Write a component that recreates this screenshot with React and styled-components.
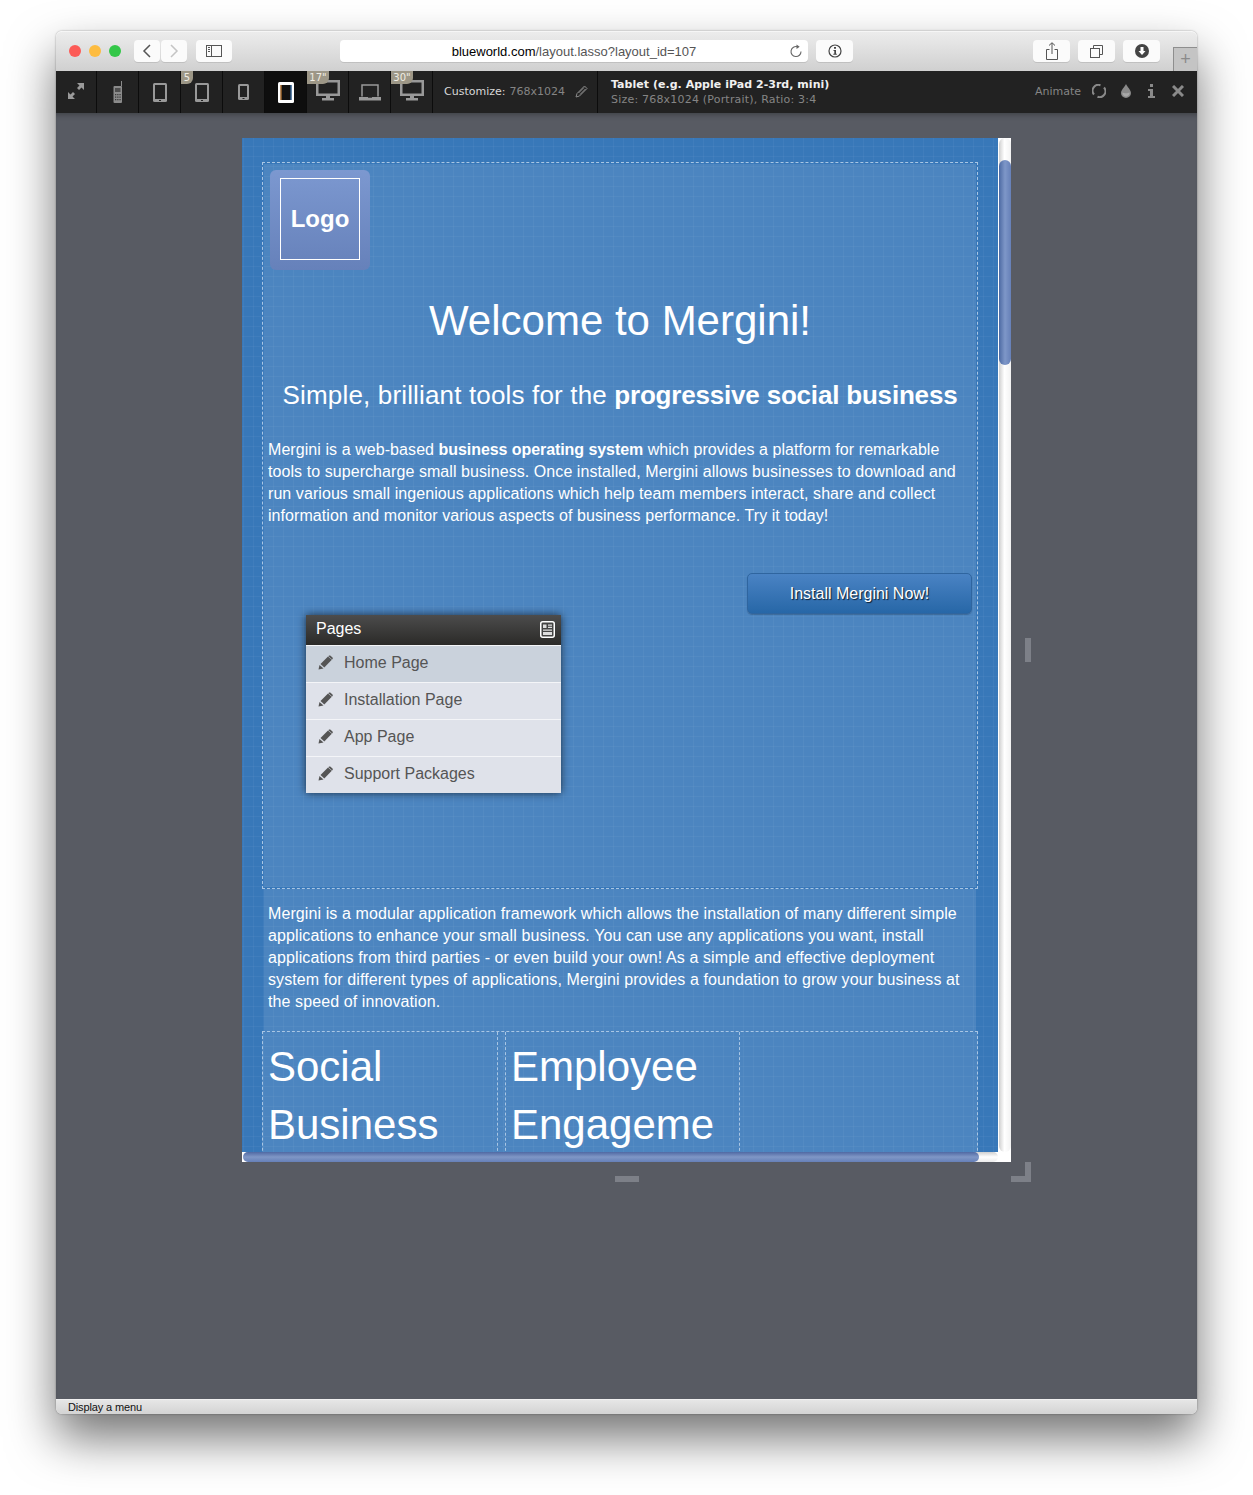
import styled, { createGlobalStyle } from 'styled-components';

const GlobalStyle = createGlobalStyle`
  html, body {
    margin: 0;
    padding: 0;
    background: #fff;
  }
  body {
    width: 1253px;
    height: 1495px;
    overflow: hidden;
    font-family: "Liberation Sans", Arial, sans-serif;
  }
`;

const Desk = styled.div`
  padding: 31px 56px 0;
`;

const Window = styled.div`
  width: 1141px;
  height: 1383px;
  display: flex;
  flex-direction: column;
  border-radius: 6px;
  box-shadow: 0 24px 48px rgba(0, 0, 0, 0.55), 0 0 2px rgba(0, 0, 0, 0.4);
`;

const TitleBar = styled.div`
  position: relative;
  height: 40px;
  flex: none;
  display: flex;
  align-items: center;
  padding: 0 0 1px 13px;
  box-sizing: border-box;
  border-radius: 6px 6px 0 0;
  background: linear-gradient(#ececec, #d0d0d0);
  border-top: 1px solid #f6f6f6;
`;

const Lights = styled.div`
  display: flex;
  gap: 8px;
  margin-right: 13px;
`;

const Light = styled.span`
  width: 12px;
  height: 12px;
  border-radius: 50%;
  background: ${(p) => p.$color};
`;

const ChromeButton = styled.div`
  width: ${(p) => p.$width || 37}px;
  height: 22px;
  margin-left: ${(p) => p.$left || 0}px;
  flex: none;
  display: flex;
  align-items: center;
  justify-content: center;
  background: #fbfbfb;
  border-radius: 4px;
  box-shadow: 0 1px 0 rgba(0, 0, 0, 0.1);
  svg {
    display: block;
  }
`;

const Address = styled.div`
  width: 468px;
  height: 22px;
  margin-left: 108px;
  flex: none;
  display: grid;
  grid-template-columns: 1fr auto 1fr;
  align-items: center;
  background: #fff;
  border-radius: 4px;
  box-shadow: 0 1px 0 rgba(0, 0, 0, 0.1);
  font-size: 13px;
  color: #555;
  svg {
    justify-self: end;
    margin-right: 5px;
  }
  b {
    font-weight: 400;
    color: #000;
  }
`;

const NewTab = styled.div`
  position: absolute;
  right: 0;
  bottom: 0;
  width: 24px;
  height: 24px;
  box-sizing: border-box;
  border: 1px solid #8e8e8e;
  border-width: 1px 0 0 1px;
  background: #c4c4c4;
  display: flex;
  align-items: center;
  justify-content: center;
  color: #8a8a8a;
  font-size: 18px;
  font-weight: 300;
`;

const Toolbar = styled.div`
  height: 42px;
  flex: none;
  display: flex;
  align-items: stretch;
  background: #222;
  font-family: "DejaVu Sans", Verdana, sans-serif;
  font-size: 11px;
`;

const Cell = styled.div`
  position: relative;
  width: ${(p) => p.$width || 42}px;
  box-sizing: border-box;
  flex: none;
  display: flex;
  align-items: center;
  justify-content: center;
  border-right: 1px solid #0c0c0c;
  background: ${(p) => (p.$active ? '#0e0e0e' : 'transparent')};
`;

const Badge = styled.span`
  position: absolute;
  z-index: 1;
  left: 0;
  top: 0;
  width: ${(p) => (p.$wide ? 22 : 12)}px;
  height: 13px;
  text-align: center;
  background: #9d9787;
  border-radius: 0 0 6px 0;
  color: #f0ede4;
  font-size: 10px;
  line-height: 13px;
`;

const Customize = styled.div`
  width: 165px;
  flex: none;
  display: flex;
  align-items: center;
  padding: 0 0 2px 11px;
  box-sizing: border-box;
  border-right: 1px solid #0c0c0c;
  color: #d8d8d8;
  white-space: nowrap;
  em {
    font-style: normal;
    color: #858585;
    margin-left: 4px;
  }
  svg {
    margin-left: 10px;
  }
`;

const DeviceInfo = styled.div`
  flex: 1;
  padding-left: 13px;
  display: flex;
  flex-direction: column;
  justify-content: center;
  gap: 1px;
  line-height: 14px;
  letter-spacing: 0.2px;
  color: #858585;
  strong {
    color: #f0f0f0;
    font-weight: 700;
    letter-spacing: 0.03px;
  }
`;

const Tools = styled.div`
  display: flex;
  align-items: center;
  padding: 0 13px 2px 0;
  color: #858585;
`;

const ToolGap = styled.span`
  display: flex;
  margin-left: ${(p) => p.$left}px;
`;

const Stage = styled.div`
  flex: 1;
  display: flex;
  justify-content: center;
  align-items: flex-start;
  padding-top: 25px;
  background: #585b63;
  box-shadow: inset 0 6px 6px -5px rgba(0, 0, 0, 0.35);
`;

const Frame = styled.div`
  position: relative;
  width: 769px;
  height: 1024px;
  background: #fff;
`;

const Viewport = styled.div`
  width: 756px;
  height: 1014px;
  overflow: hidden;
  box-sizing: border-box;
  padding: 24px 20px 0;
  background-color: #3878b9;
  background-image:
    linear-gradient(rgba(255, 255, 255, 0.04) 1px, transparent 1px),
    linear-gradient(90deg, rgba(255, 255, 255, 0.04) 1px, transparent 1px);
  background-size: 10px 10px;
  background-position: 1px 8px;
  color: #fff;
`;

const Region = styled.div`
  position: relative;
  box-sizing: border-box;
  width: 716px;
  height: 727px;
  padding: 1px;
  border: 1px dashed #a9c6e4;
  background: rgba(255, 255, 255, 0.1);
  background-clip: content-box;
`;

const TextRegion = styled.div`
  box-sizing: border-box;
  height: 142px;
  margin: 0 2px;
  padding-top: 14px;
  background: rgba(255, 255, 255, 0.1);
`;

const LogoBox = styled.div`
  width: 100px;
  height: 100px;
  margin: 6px 0 0 6px;
  padding: 8px 10px 10px;
  box-sizing: border-box;
  border-radius: 6px;
  background: linear-gradient(#7c98d0, #6681ba);
`;

const LogoInner = styled.div`
  height: 82px;
  box-sizing: border-box;
  border: 1px solid #fff;
  display: flex;
  align-items: center;
  justify-content: center;
  font-size: 24px;
  font-weight: 700;
`;

const Title = styled.h1`
  margin: 26px 0 0;
  text-align: center;
  font-size: 42px;
  line-height: 50px;
  font-weight: 400;
`;

const Subtitle = styled.h2`
  margin: 34px 0 0;
  text-align: center;
  font-size: 26px;
  line-height: 30px;
  font-weight: 400;
  letter-spacing: 0.16px;
  b {
    letter-spacing: -0.19px;
  }
`;

const Para = styled.p`
  margin: ${(p) => p.$top}px 0 0;
  padding: 0 10px 0 4px;
  font-size: 16px;
  line-height: 22px;
  letter-spacing: ${(p) => p.$spacing}px;
  b {
    letter-spacing: -0.07px;
  }
`;

const InstallRow = styled.div`
  display: flex;
  justify-content: flex-end;
  margin-top: 46px;
  padding-right: 4px;
`;

const InstallButton = styled.div`
  width: 225px;
  height: 41px;
  box-sizing: border-box;
  display: flex;
  align-items: center;
  justify-content: center;
  border-radius: 5px;
  border: 1px solid #2f659f;
  background: linear-gradient(#4a83c4, #2767a7);
  box-shadow: 0 1px 1px rgba(0, 0, 0, 0.2);
  font-size: 16px;
  text-shadow: 1px 1px 1px rgba(0, 0, 0, 0.75);
`;

const PagesPanel = styled.div`
  position: absolute;
  left: 43px;
  top: 452px;
  width: 255px;
  box-shadow: 0 0 9px rgba(0, 0, 0, 0.65);
  border-radius: 2px;
`;

const PanelHead = styled.div`
  height: 30px;
  box-sizing: border-box;
  padding: 0 6px 2px 10px;
  display: flex;
  align-items: center;
  justify-content: space-between;
  background: linear-gradient(#4c4c4c, #2b2a28);
  font-size: 16px;
`;

const PanelRow = styled.div`
  height: 34px;
  padding: 0 0 2px 12px;
  display: flex;
  align-items: center;
  gap: 11px;
  border-top: 1px solid #f4f5f8;
  background: ${(p) => (p.$active ? '#cad2dc' : '#dfe2ea')};
  color: #555;
  font-size: 16px;
  svg {
    margin-bottom: 2px;
  }
`;

const Columns = styled.div`
  position: relative;
  box-sizing: border-box;
  width: 716px;
  height: 140px;
  display: flex;
  border: 1px dashed #a9c6e4;
  border-bottom: none;
  background: rgba(255, 255, 255, 0.1);
`;

const Column = styled.div`
  width: ${(p) => p.$width}px;
  flex: none;
  box-sizing: border-box;
  margin-left: ${(p) => p.$left || 0}px;
  padding: 6px 0 0 5px;
  border-left: ${(p) => (p.$left ? '1px dashed #a9c6e4' : 'none')};
  border-right: 1px dashed #a9c6e4;
  font-size: 42px;
  line-height: 58px;
  overflow: hidden;
  white-space: nowrap;
`;

const VTrack = styled.div`
  position: absolute;
  right: 0;
  top: 0;
  width: 13px;
  height: 1014px;
  padding-left: 1px;
  box-sizing: border-box;
`;

const VBar = styled.div`
  height: 1014px;
  width: 12px;
  border-radius: 6px;
  background: linear-gradient(90deg, #cfcfcf, #fff 45%, #f2f2f2);
`;

const VThumb = styled.div`
  position: absolute;
  left: 1px;
  top: 22px;
  width: 12px;
  height: 205px;
  border-radius: 6px;
  background: linear-gradient(90deg, #4d6aa3, #7e97c8 50%, #6680b8);
`;

const HTrack = styled.div`
  position: absolute;
  left: 1px;
  bottom: 0;
  width: 755px;
  height: 10px;
  border-radius: 5px;
  background: linear-gradient(#d0d0d0, #fff 50%, #ececec);
`;

const HThumb = styled.div`
  width: 736px;
  height: 10px;
  border-radius: 5px;
  background: linear-gradient(#5069a3, #7f97c6 50%, #6680b8);
`;

const Handle = styled.div`
  position: absolute;
  background: #7d8088;
  ${(p) => p.$side === 'right' && 'left: 783px; top: 500px; width: 6px; height: 24px;'}
  ${(p) => p.$side === 'bottom' && 'left: 373px; top: 1038px; width: 24px; height: 6px;'}
`;

const Corner = styled.div`
  position: absolute;
  left: 769px;
  top: 1024px;
  width: 20px;
  height: 20px;
  box-sizing: border-box;
  border-right: 6px solid #7d8088;
  border-bottom: 6px solid #7d8088;
  clip-path: polygon(100% 0, 100% 100%, 0 100%, 0 70%, 70% 70%, 70% 0);
`;

const StatusBar = styled.div`
  height: 15px;
  flex: none;
  padding-left: 12px;
  display: flex;
  align-items: center;
  border-top: 1px solid #f0f0f0;
  box-sizing: border-box;
  border-radius: 0 0 6px 6px;
  background: linear-gradient(#e6e6e6, #d3d3d3);
  color: #111;
  font-size: 11px;
  letter-spacing: -0.14px;
`;

const Tablet = ({ w = 14, h = 19, color = '#999' }) => (
  <svg width={w} height={h} viewBox={`0 0 ${w} ${h}`}>
    <rect x="0" y="0" width={w} height={h} rx="1.5" fill={color} />
    <rect x="2" y="2" width={w - 4} height={h - 5} fill="#222" />
    <rect x={w / 2 - 1} y={h - 2} width="2" height="1" fill="#222" />
  </svg>
);

const Monitor = () => (
  <svg width="24" height="21" viewBox="0 0 24 21" style={{ marginBottom: 3 }}>
    <rect x="1.250" y="1.250" width="21.500" height="13.500" fill="none" stroke="#999" strokeWidth="2.500" />
    <path d="M10 16h4v2h4v2.500H6V18h4z" fill="#999" />
  </svg>
);

const Laptop = () => (
  <svg width="22" height="17" viewBox="0 0 22 17">
    <path d="M3 12.500V1h16v11.500" fill="none" stroke="#999" strokeWidth="1.500" />
    <path d="M0 13h22v3.500H0z" fill="#999" />
    <path d="M9 13h4v1H9z" fill="#444" />
  </svg>
);

const Phone = () => (
  <svg width="10" height="22" viewBox="0 0 10 22" fill="#8b8b8b">
    <path d="M8 0h1v5H8z" />
    <rect x="0.500" y="5" width="8.500" height="17" rx="1" />
    <rect x="2" y="7" width="5.500" height="4" fill="#4e4e4e" />
    <path d="M2 13h1.300v1.300H2zM4.200 13h1.300v1.300H4.200zM6.400 13h1.300v1.300H6.400zM2 15.500h1.300v1.300H2zM4.200 15.500h1.300v1.300H4.200zM6.400 15.500h1.300v1.300H6.400zM2 18h1.300v1.300H2zM4.200 18h1.300v1.300H4.200zM6.400 18h1.300v1.300H6.400z" fill="#3a3a3a" />
  </svg>
);

const Expand = () => (
  <svg width="18" height="18" viewBox="0 0 18 18" fill="#9a9a9a" style={{ marginBottom: 3 }}>
    <path d="M10 1h7v7l-2.500-2.500L12 8 10 6l2.500-2.500zM8 17H1v-7l2.500 2.500L6 10l2 2-2.500 2.500z" />
  </svg>
);

const SelectedTablet = () => (
  <svg width="16" height="21" viewBox="0 0 16 21">
    <rect x="0" y="0" width="16" height="21" rx="1.500" fill="#fff" />
    <rect x="2.500" y="3" width="11" height="15" fill="#111" />
    <rect x="2.500" y="3" width="1" height="15" fill="#e8923a" />
    <rect x="12.500" y="3" width="1" height="15" fill="#3a7fc4" />
  </svg>
);

const Pencil = ({ color = '#555', size = 15 }) => (
  <svg width={size} height={size} viewBox="0 0 15 15" fill={color}>
    <path d="M0.500 14.500l1-4.500 4 3.500z" />
    <path d="M2.500 9L10 1.500l3.800 3.300L6.300 12.400z" />
    <path d="M10.800 0.800c.6-.5 1.200-.5 1.700-.1l2 1.800c.5.500.4 1.100 0 1.600l-.4.400-3.700-3.300z" />
  </svg>
);

const PencilOutline = () => (
  <svg width="13" height="13" viewBox="0 0 13 13" fill="none" stroke="#8a8a8a">
    <path d="M1 12l1-3.500L9.500 1 12 3.500 4.500 11z" />
    <path d="M3.500 8L9 2.500M5 9.500L10.500 4" />
  </svg>
);

const PanelIcon = () => (
  <svg width="15" height="17" viewBox="0 0 15 17">
    <rect x="0.750" y="0.750" width="13.500" height="15.500" rx="2" fill="#444" stroke="#fff" strokeWidth="1.500" />
    <path d="M3 3.500h3.500V7H3zM8 3.500h4v1.200H8zM8 5.800h4V7H8zM3 8.500h9v1.200H3zM3 11h9v3H3z" fill="#ddd" />
  </svg>
);

const Sidebar = () => (
  <svg width="16" height="12" viewBox="0 0 16 12" fill="none" stroke="#555">
    <rect x="0.500" y="0.500" width="15" height="11" />
    <path d="M5.500 0.500v11M2 2.500h2M2 4.500h2M2 6.500h2" />
  </svg>
);

const Chevron = ({ left, color }) => (
  <svg width="10" height="14" viewBox="0 0 10 14" fill="none" stroke={color} strokeWidth="1.500">
    <path d={left ? 'M8 1L2 7l6 6' : 'M2 1l6 6-6 6'} />
  </svg>
);

const Reload = () => (
  <svg width="14" height="14" viewBox="0 0 14 14" fill="none" stroke="#666" strokeWidth="1.100">
    <path d="M8.500 2.800A5 5 0 1 0 12 7.500" />
    <path d="M7.500 0.500l3.200 2.300-3.200 2.200z" fill="#666" stroke="none" />
  </svg>
);

const InfoCircle = () => (
  <svg width="14" height="14" viewBox="0 0 14 14" fill="none">
    <circle cx="7" cy="7" r="6" stroke="#444" strokeWidth="1.200" />
    <path d="M6 3h2v1.800H6zM5.500 6h2.500v3.800h.8v1H5.300v-1h1V7h-.8z" fill="#444" />
  </svg>
);

const Share = () => (
  <svg width="12" height="18" viewBox="0 0 12 18" fill="none" stroke="#555">
    <path d="M3.500 7.500H.5v10h11v-10H8.500M6 12V1M3 3.500L6 .7l3 2.800" />
  </svg>
);

const Tabs = () => (
  <svg width="13" height="13" viewBox="0 0 13 13" fill="none" stroke="#555">
    <rect x="0.500" y="3.500" width="9" height="9" fill="#fbfbfb" />
    <path d="M3.500 3.500v-3h9v9h-3" />
  </svg>
);

const Download = () => (
  <svg width="14" height="14" viewBox="0 0 14 14">
    <circle cx="7" cy="7" r="7" fill="#444" />
    <path d="M5.500 3h3v4h2L7 11 3.500 7h2z" fill="#fff" />
  </svg>
);

const Spin = () => (
  <svg width="14" height="14" viewBox="0 0 14 14" fill="none" stroke="#8a8a8a" strokeWidth="2">
    <path d="M2 10.500A5.800 5.800 0 0 1 8.500 1.300M12 3.500a5.800 5.800 0 0 1-6.500 9.200" />
  </svg>
);

const Drop = () => (
  <svg width="10" height="14" viewBox="0 0 10 14" fill="#8a8a8a">
    <path d="M5 0c1 2.500 5 6 5 9a5 5 0 0 1-10 0c0-3 4-6.500 5-9z" />
    <path d="M1.500 8.500c1.500 1 5.500 1 7 0 .5 2-1.500 4-3.500 4s-4-2-3.500-4z" fill="#a8a8a8" />
  </svg>
);

const InfoMark = () => (
  <svg width="7" height="14" viewBox="0 0 7 14" fill="#8a8a8a">
    <path d="M2 0h3v3H2zM0 5h5v7h2v2H0v-2h2V7H0z" />
  </svg>
);

const Close = () => (
  <svg width="12" height="12" viewBox="0 0 12 12" fill="none" stroke="#8a8a8a" strokeWidth="3">
    <path d="M1 1l10 10M11 1L1 11" />
  </svg>
);

const pages = ['Home Page', 'Installation Page', 'App Page', 'Support Packages'];

export default function App() {
  return (
    <Desk>
      <GlobalStyle />
      <Window>
        <TitleBar>
          <Lights>
            <Light $color="#fc5b57" />
            <Light $color="#fdbc40" />
            <Light $color="#33c748" />
          </Lights>
          <ChromeButton $width={26}>
            <Chevron left color="#555" />
          </ChromeButton>
          <ChromeButton $width={26} $left={1}>
            <Chevron color="#c4c4c4" />
          </ChromeButton>
          <ChromeButton $width={36} $left={9}>
            <Sidebar />
          </ChromeButton>
          <Address>
            <span />
            <span>
              <b>blueworld.com</b>/layout.lasso?layout_id=107
            </span>
            <Reload />
          </Address>
          <ChromeButton $left={8}>
            <InfoCircle />
          </ChromeButton>
          <ChromeButton $left={180}>
            <Share />
          </ChromeButton>
          <ChromeButton $left={8}>
            <Tabs />
          </ChromeButton>
          <ChromeButton $left={8}>
            <Download />
          </ChromeButton>
          <NewTab>+</NewTab>
        </TitleBar>

        <Toolbar>
          <Cell $width={41}>
            <Expand />
          </Cell>
          <Cell>
            <Phone />
          </Cell>
          <Cell>
            <Tablet />
          </Cell>
          <Cell>
            <Badge>5</Badge>
            <Tablet />
          </Cell>
          <Cell>
            <Tablet w={11} h={16} />
          </Cell>
          <Cell $active>
            <SelectedTablet />
          </Cell>
          <Cell>
            <Badge $wide>17"</Badge>
            <Monitor />
          </Cell>
          <Cell>
            <Laptop />
          </Cell>
          <Cell>
            <Badge $wide>30"</Badge>
            <Monitor />
          </Cell>
          <Customize>
            Customize:<em>768x1024</em>
            <PencilOutline />
          </Customize>
          <DeviceInfo>
            <strong>Tablet (e.g. Apple iPad 2-3rd, mini)</strong>
            <span>Size: 768x1024 (Portrait), Ratio: 3:4</span>
          </DeviceInfo>
          <Tools>
            Animate
            <ToolGap $left={11}>
              <Spin />
            </ToolGap>
            <ToolGap $left={15}>
              <Drop />
            </ToolGap>
            <ToolGap $left={17}>
              <InfoMark />
            </ToolGap>
            <ToolGap $left={17}>
              <Close />
            </ToolGap>
          </Tools>
        </Toolbar>

        <Stage>
          <Frame>
            <Viewport>
              <Region>
                <LogoBox>
                  <LogoInner>Logo</LogoInner>
                </LogoBox>
                <Title>Welcome to Mergini!</Title>
                <Subtitle>
                  Simple, brilliant tools for the <b>progressive social business</b>
                </Subtitle>
                <Para $top={29} $spacing={0.07}>
                  Mergini is a web-based <b>business operating system</b> which provides a
                  platform for remarkable tools to supercharge small business. Once installed,
                  Mergini allows businesses to download and run various small ingenious
                  applications which help team members interact, share and collect information
                  and monitor various aspects of business performance. Try it today!
                </Para>
                <InstallRow>
                  <InstallButton>Install Mergini Now!</InstallButton>
                </InstallRow>
                <PagesPanel>
                  <PanelHead>
                    Pages
                    <PanelIcon />
                  </PanelHead>
                  {pages.map((page, i) => (
                    <PanelRow key={page} $active={i === 0}>
                      <Pencil />
                      {page}
                    </PanelRow>
                  ))}
                </PagesPanel>
              </Region>
              <TextRegion>
                <Para $top={0} $spacing={0.1}>
                  Mergini is a modular application framework which allows the installation of many
                  different simple applications to enhance your small business. You can use any
                  applications you want, install applications from third parties - or even build
                  your own! As a simple and effective deployment system for different types of
                  applications, Mergini provides a foundation to grow your business at the speed
                  of innovation.
                </Para>
              </TextRegion>
              <Columns>
                <Column $width={235}>
                  Social
                  <br />
                  Business
                </Column>
                <Column $width={235} $left={7}>
                  Employee
                  <br />
                  Engageme
                </Column>
              </Columns>
            </Viewport>
            <VTrack>
              <VBar />
              <VThumb />
            </VTrack>
            <HTrack>
              <HThumb />
            </HTrack>
            <Handle $side="right" />
            <Handle $side="bottom" />
            <Corner />
          </Frame>
        </Stage>

        <StatusBar>Display a menu</StatusBar>
      </Window>
    </Desk>
  );
}
